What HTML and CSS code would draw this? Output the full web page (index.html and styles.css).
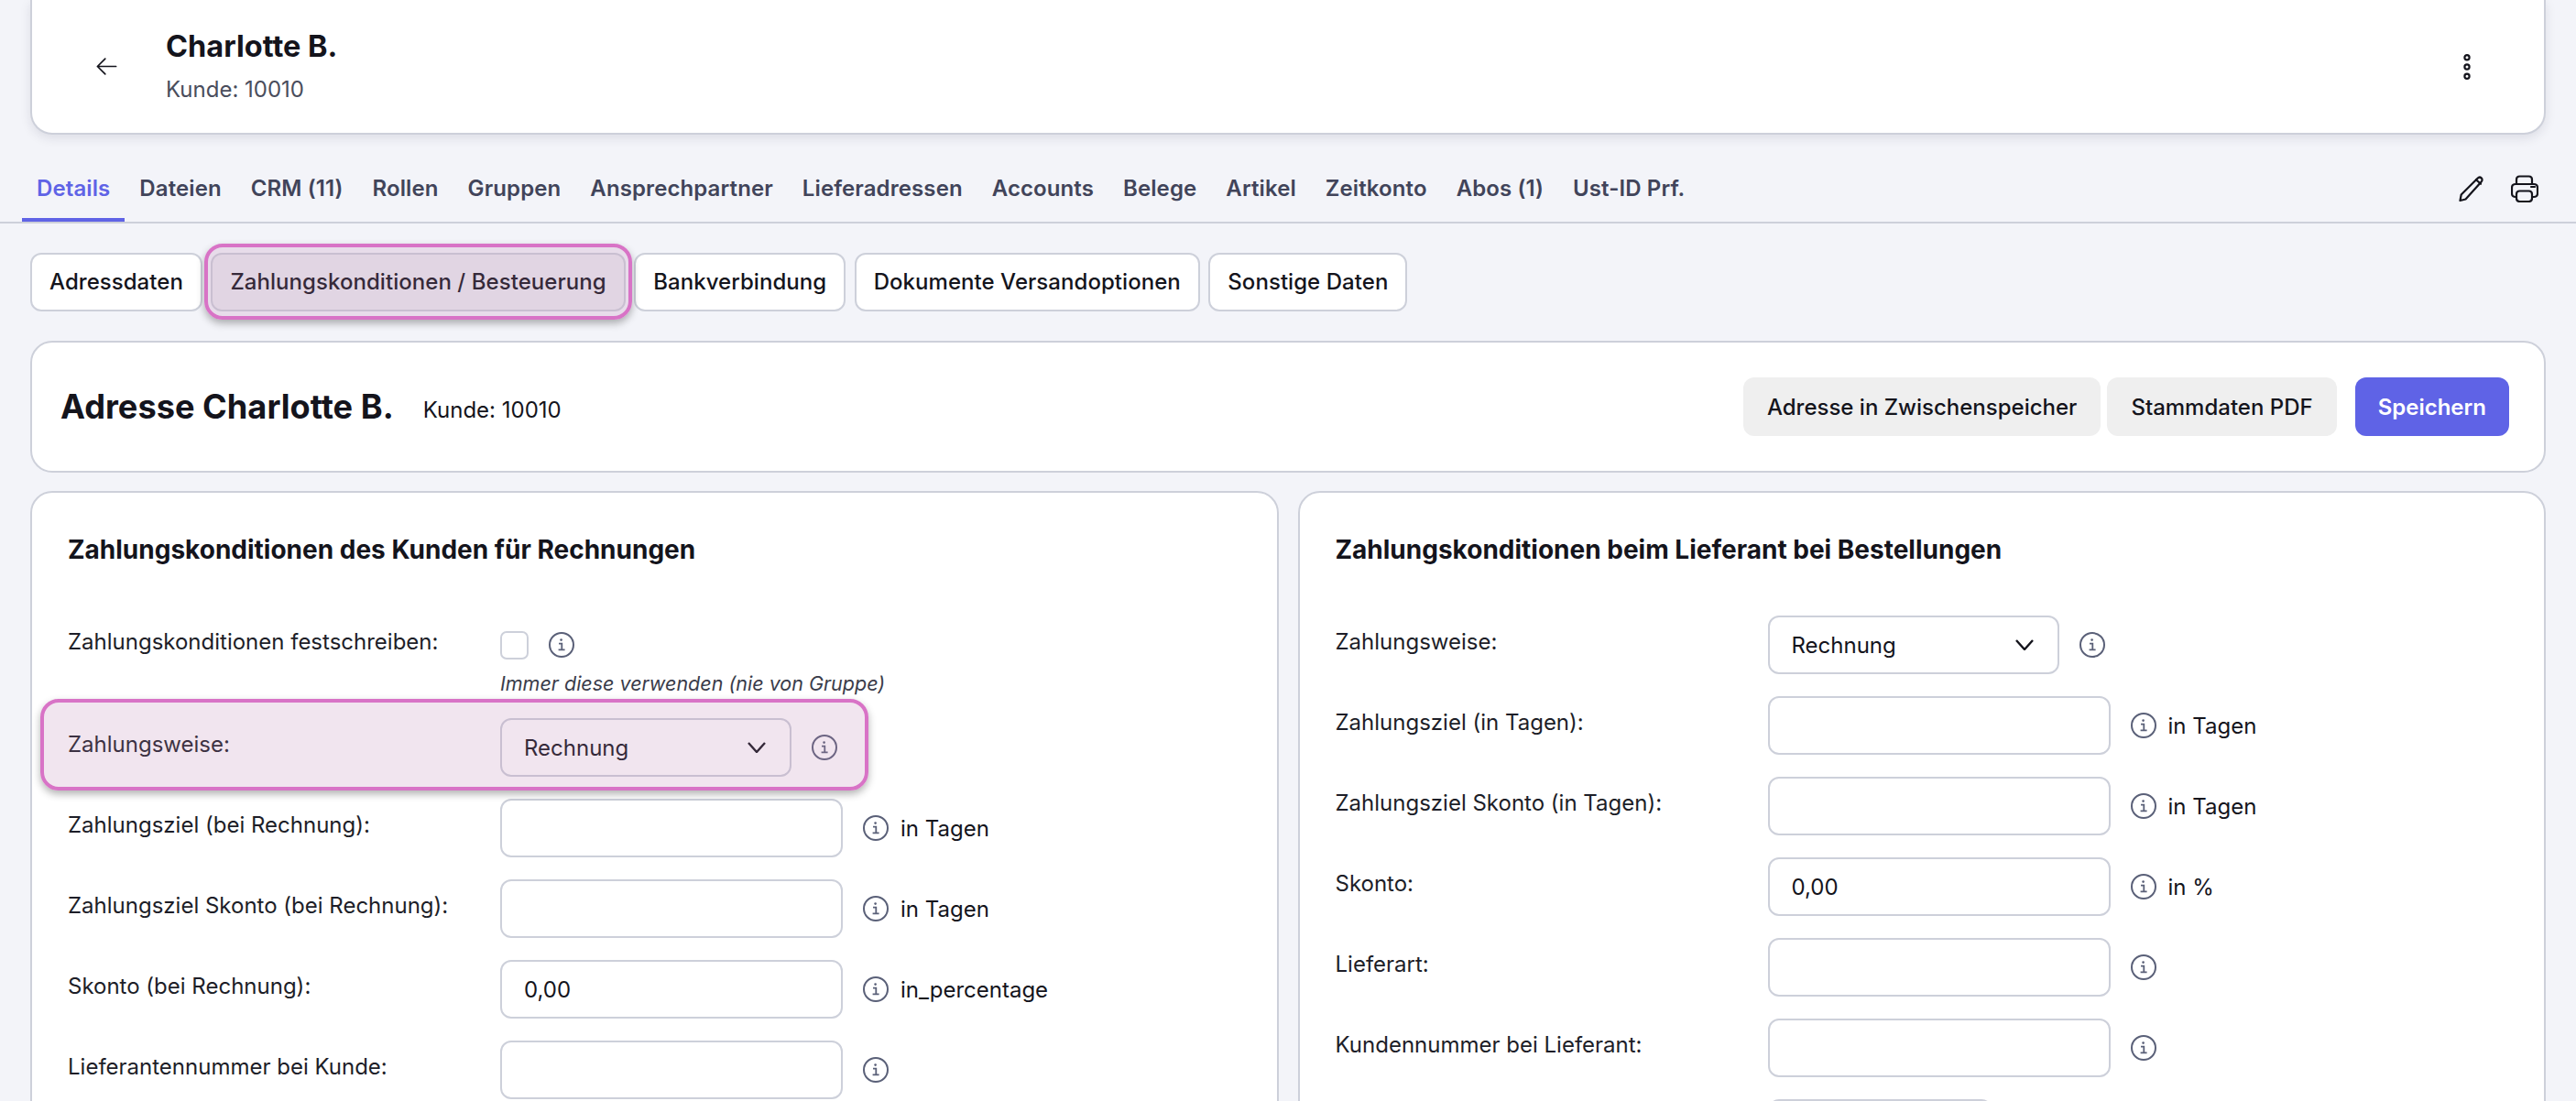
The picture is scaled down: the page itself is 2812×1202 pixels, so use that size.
FILE: index.html
```html
<!DOCTYPE html>
<html lang="de">
<head>
  <meta charset="UTF-8" />
  <title>Charlotte B.</title>
  <link rel="stylesheet" href="styles.css">
</head>
<body>

  <svg class="icon-defs" xmlns="http://www.w3.org/2000/svg">
    <symbol id="info" viewBox="0 0 28 28">
      <circle cx="14" cy="14" r="13" fill="none" stroke="currentColor" stroke-width="2" />
      <circle cx="13.6" cy="8.6" r="1.3" fill="currentColor" />
      <path d="M11 12.6h3.3v6.4M10.6 19.4h7" fill="none" stroke="currentColor" stroke-width="1.8" />
    </symbol>
    <symbol id="chevron" viewBox="0 0 20 12">
      <path d="M1 1l9 10 9-10" fill="none" stroke="currentColor" stroke-width="2.4" />
    </symbol>
  </svg>

  <header class="customer">
    <svg class="customer__back" xmlns="http://www.w3.org/2000/svg" width="27" height="27" viewBox="0 0 24 24">
      <path d="M10.5 19.5L3 12m0 0l7.5-7.5M3 12h18" />
    </svg>
    <div class="customer__text">
      <h1 class="customer__name">Charlotte B.</h1>
      <div class="customer__no">Kunde: 10010</div>
    </div>
    <svg class="customer__more" xmlns="http://www.w3.org/2000/svg" width="10" height="30" viewBox="0 0 10 30">
      <circle cx="5" cy="4.7" r="2.6" />
      <circle cx="5" cy="15" r="2.6" />
      <circle cx="5" cy="25.3" r="2.6" />
    </svg>
  </header>

  <nav class="tabs">
    <a class="tab tab--active">Details</a>
    <a class="tab">Dateien</a>
    <a class="tab">CRM (11)</a>
    <a class="tab">Rollen</a>
    <a class="tab">Gruppen</a>
    <a class="tab">Ansprechpartner</a>
    <a class="tab">Lieferadressen</a>
    <a class="tab">Accounts</a>
    <a class="tab">Belege</a>
    <a class="tab">Artikel</a>
    <a class="tab">Zeitkonto</a>
    <a class="tab">Abos (1)</a>
    <a class="tab">Ust-ID Prf.</a>
    <div class="tabs__tools">
      <svg xmlns="http://www.w3.org/2000/svg" width="30" height="30" viewBox="0 0 30 30">
        <path d="M2.5 28l1.2-6.5L21.5 3.7c1.5-1.5 3-1.500 4.200-.3s1.200 2.800-.3 4.300L8.500 26.500z" />
        <path d="M20 5.200l5 4.600" />
      </svg>
      <svg xmlns="http://www.w3.org/2000/svg" width="30" height="30" viewBox="0 0 30 30">
        <path d="M6 10V5c0-2.200 1.300-3.500 3.500-3.500h10c2.200 0 3.500 1.300 3.500 3.500v5" />
        <path d="M6 24H5c-2.500 0-4-1.500-4-4v-6c0-2.500 1.500-4 4-4h20c2.500 0 4 1.500 4 4v6c0 2.500-1.500 4-4 4h-1" />
        <path d="M9.500 17.500h10c2.200 0 3.500 1.300 3.500 3.500v4.500c0 2.200-1.300 3.500-3.500 3.500h-10C7.300 29 6 27.700 6 25.500V21c0-2.200 1.300-3.500 3.500-3.500z" />
        <path d="M22 13h4" />
      </svg>
    </div>
  </nav>

  <div class="subtabs">
    <a class="subtab">Adressdaten</a>
    <a class="subtab subtab--active mark">Zahlungskonditionen / Besteuerung</a>
    <a class="subtab">Bankverbindung</a>
    <a class="subtab">Dokumente Versandoptionen</a>
    <a class="subtab">Sonstige Daten</a>
  </div>

  <section class="titlebar">
    <h2 class="titlebar__name">Adresse Charlotte B.</h2>
    <span class="titlebar__no">Kunde: 10010</span>
    <div class="titlebar__actions">
      <button class="btn">Adresse in Zwischenspeicher</button>
      <button class="btn">Stammdaten PDF</button>
      <button class="btn btn--primary">Speichern</button>
    </div>
  </section>

  <main class="panels">
    <section class="panel">
      <h3 class="panel__title">Zahlungskonditionen des Kunden für Rechnungen</h3>

      <div class="row row--check">
        <label class="row__label">Zahlungskonditionen festschreiben:</label>
        <div class="row__field">
          <span class="checkbox"></span>
          <svg class="info"><use href="#info" /></svg>
        </div>
        <div class="row__hint">Immer diese verwenden (nie von Gruppe)</div>
      </div>

      <div class="row row--mark mark">
        <label class="row__label">Zahlungsweise:</label>
        <div class="row__field">
          <div class="select select--left">Rechnung <svg class="select__arrow"><use href="#chevron" /></svg></div>
          <svg class="info"><use href="#info" /></svg>
        </div>
      </div>

      <div class="row">
        <label class="row__label">Zahlungsziel (bei Rechnung):</label>
        <div class="row__field">
          <input class="input" type="text">
          <svg class="info"><use href="#info" /></svg>
          <span class="row__unit">in Tagen</span>
        </div>
      </div>

      <div class="row">
        <label class="row__label">Zahlungsziel Skonto (bei Rechnung):</label>
        <div class="row__field">
          <input class="input" type="text">
          <svg class="info"><use href="#info" /></svg>
          <span class="row__unit">in Tagen</span>
        </div>
      </div>

      <div class="row">
        <label class="row__label">Skonto (bei Rechnung):</label>
        <div class="row__field">
          <input class="input" type="text" value="0,00">
          <svg class="info"><use href="#info" /></svg>
          <span class="row__unit">in_percentage</span>
        </div>
      </div>

      <div class="row">
        <label class="row__label">Lieferantennummer bei Kunde:</label>
        <div class="row__field">
          <input class="input" type="text">
          <svg class="info"><use href="#info" /></svg>
        </div>
      </div>
    </section>

    <section class="panel">
      <h3 class="panel__title">Zahlungskonditionen beim Lieferant bei Bestellungen</h3>

      <div class="row">
        <label class="row__label">Zahlungsweise:</label>
        <div class="row__field">
          <div class="select select--right">Rechnung <svg class="select__arrow"><use href="#chevron" /></svg></div>
          <svg class="info"><use href="#info" /></svg>
        </div>
      </div>

      <div class="row">
        <label class="row__label">Zahlungsziel (in Tagen):</label>
        <div class="row__field">
          <input class="input" type="text">
          <svg class="info"><use href="#info" /></svg>
          <span class="row__unit">in Tagen</span>
        </div>
      </div>

      <div class="row">
        <label class="row__label">Zahlungsziel Skonto (in Tagen):</label>
        <div class="row__field">
          <input class="input" type="text">
          <svg class="info"><use href="#info" /></svg>
          <span class="row__unit">in Tagen</span>
        </div>
      </div>

      <div class="row">
        <label class="row__label">Skonto:</label>
        <div class="row__field">
          <input class="input" type="text" value="0,00">
          <svg class="info"><use href="#info" /></svg>
          <span class="row__unit">in %</span>
        </div>
      </div>

      <div class="row">
        <label class="row__label">Lieferart:</label>
        <div class="row__field">
          <input class="input" type="text">
          <svg class="info"><use href="#info" /></svg>
        </div>
      </div>

      <div class="row">
        <label class="row__label">Kundennummer bei Lieferant:</label>
        <div class="row__field">
          <input class="input" type="text">
          <svg class="info"><use href="#info" /></svg>
        </div>
      </div>

      <div class="row">
        <div class="row__label"></div>
        <div class="row__field">
          <div class="select select--cut"></div>
        </div>
      </div>
    </section>
  </main>

</body>
</html>
```

FILE: styles.css
```css
html, body {
  margin: 0;
  padding: 0;
  height: 1202px;
  overflow: hidden;
}

body {
  background: #f3f4f9;
  color: #14141c;
  font-family: 'Inter', 'Liberation Sans', sans-serif;
  font-size: 24px;
}

.icon-defs {
  display: none;
}

/* highlighted elements get a tinted layer over them */
.mark {
  position: relative;
  border-radius: 20px;
}

.mark::after {
  content: '';
  position: absolute;
  border: 4px solid #d873c6;
  border-radius: 20px;
  background: rgba(185, 125, 175, 0.2);
  box-shadow: 0 4px 8px rgba(0, 0, 0, 0.3);
  pointer-events: none;
}

/* customer header */
.customer {
  display: flex;
  align-items: center;
  height: 147px;
  box-sizing: border-box;
  margin: 0 33px;
  padding: 0 79px 0 68px;
  background: white;
  border: 2px solid #cdd0da;
  border-top: none;
  border-radius: 0 0 24px 24px;
  box-shadow: 0 4px 12px rgba(30, 30, 60, 0.1);
}

.customer__back {
  fill: none;
  stroke: #14141c;
  stroke-width: 1.5;
  stroke-linecap: round;
  stroke-linejoin: round;
}

.customer__text {
  margin-left: 51px;
  flex: 1;
}

.customer__name {
  margin: 0 0 13px;
  font-size: 32.5px;
  line-height: 38px;
  font-weight: 700;
}

.customer__no {
  font-size: 24px;
  line-height: 30px;
  color: #4a4d5c;
}

.customer__more {
  fill: none;
  stroke: #14141c;
  stroke-width: 2.2;
}

/* main tabs */
.tabs {
  display: flex;
  align-items: stretch;
  height: 97px;
  box-sizing: border-box;
  padding: 37px 24px 0;
  border-bottom: 2px solid #cdd0da;
}

.tab {
  padding: 0 16px;
  height: 58px;
  line-height: 44px;
  box-sizing: border-box;
  font-size: 24px;
  font-weight: 600;
  letter-spacing: 0.1px;
  color: #41445a;
}

.tab--active {
  color: #5f63e6;
  border-bottom: 4px solid #5f63e6;
}

.tabs__tools {
  display: flex;
  gap: 28px;
  margin-left: auto;
  padding: 7px 17px 0 0;
  height: 30px;
}

.tabs__tools svg {
  fill: none;
  stroke: #14141c;
  stroke-width: 2.2;
  stroke-linejoin: round;
  stroke-linecap: round;
}

/* sub tabs */
.subtabs {
  display: flex;
  gap: 9.5px;
  margin: 32px 33px 0;
}

.subtab {
  height: 64px;
  line-height: 60px;
  box-sizing: border-box;
  padding: 0 19px;
  background: white;
  border: 2px solid #cdd0da;
  border-radius: 12px;
  font-size: 24px;
  font-weight: 500;
  letter-spacing: 0.05px;
}

.subtab--active {
  background: #ececf0;
}

.subtab--active::after {
  inset: -12px -9px -11px -9px;
}

/* title bar */
.titlebar {
  display: flex;
  align-items: center;
  height: 144px;
  box-sizing: border-box;
  margin: 32px 33px 0;
  padding: 0 38px 0 31px;
  background: white;
  border: 2px solid #cdd0da;
  border-radius: 24px;
}

.titlebar__name {
  margin: 0;
  font-size: 36.2px;
  font-weight: 700;
}

.titlebar__no {
  margin-left: 32px;
  padding-top: 6px;
  font-size: 24px;
}

.titlebar__actions {
  display: flex;
  margin-left: auto;
}

.btn {
  height: 64px;
  padding: 0 26px;
  background: #efefef;
  border: none;
  border-radius: 12px;
  color: #14141c;
  font-family: inherit;
  font-size: 24px;
  font-weight: 500;
  margin-left: 7px;
}

.btn--primary {
  margin-left: 20px;
  padding: 0 25px;
  background: #5f63e6;
  color: white;
  font-weight: 600;
}

/* form panels */
.panels {
  display: grid;
  grid-template-columns: 1fr 1fr;
  gap: 21px;
  margin: 20px 33px 0;
}

.panel {
  height: 800px;
  box-sizing: border-box;
  padding: 44px 39px 0;
  background: white;
  border: 2px solid #cdd0da;
  border-radius: 24px;
}

.panel__title {
  margin: 0 0 54px;
  font-size: 28px;
  line-height: 36px;
  font-weight: 700;
}

.row {
  display: grid;
  grid-template-columns: 472px 1fr;
  margin-bottom: 24px;
  align-items: start;
}

.row__label {
  padding-top: 13px;
  font-size: 24px;
  line-height: 32px;
  color: #1d1e28;
}

.row__field {
  display: flex;
  align-items: center;
  height: 64px;
}

.row__hint {
  grid-column: 2;
  margin-top: -5px;
  font-size: 21.5px;
  line-height: 26px;
  font-style: italic;
  color: #3a3c4a;
}

.row--check {
  height: 88px;
}

.row--mark::after {
  inset: -21px 0 -15px -30px;
  width: 904px;
  box-sizing: border-box;
}

.checkbox {
  width: 31px;
  height: 31px;
  box-sizing: border-box;
  background: white;
  border: 2px solid #cdd0da;
  border-radius: 7px;
}

.info {
  flex: none;
  width: 28px;
  height: 28px;
  margin-left: 22px;
  color: #5a6078;
}

.input {
  width: 374px;
  height: 64px;
  box-sizing: border-box;
  padding: 0 24px;
  background: white;
  border: 2px solid #cdd0da;
  border-radius: 12px;
  color: #14141c;
  font-family: inherit;
  font-size: 24px;
}

.select {
  display: flex;
  align-items: center;
  justify-content: space-between;
  height: 64px;
  box-sizing: border-box;
  padding: 0 26px 0 24px;
  background: white;
  border: 2px solid #cdd0da;
  border-radius: 12px;
  font-size: 24px;
}

.select--left {
  width: 318px;
}

.select--right {
  width: 318px;
}

.select--cut {
  width: 245px;
}

.select__arrow {
  width: 20px;
  height: 12px;
  color: #14141c;
}

.row__unit {
  margin-left: 13px;
  font-size: 24px;
}
```
